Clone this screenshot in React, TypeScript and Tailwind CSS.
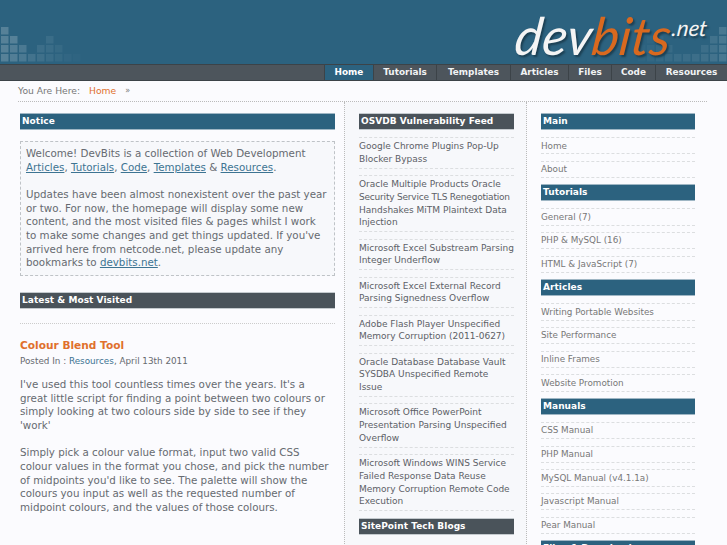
import React from 'react';

const navItems = [
  { label: 'Home', width: 'w-[49px]' },
  { label: 'Tutorials', width: 'w-[63px]' },
  { label: 'Templates', width: 'w-[74px]' },
  { label: 'Articles', width: 'w-[58px]' },
  { label: 'Files', width: 'w-[43px]' },
  { label: 'Code', width: 'w-[44px]' },
  { label: 'Resources', width: 'w-[72px]' },
];

const feed = [
  ['Google Chrome Plugins Pop-Up', 'Blocker Bypass'],
  ['Oracle Multiple Products Oracle', 'Security Service TLS Renegotiation', 'Handshakes MiTM Plaintext Data', 'Injection'],
  ['Microsoft Excel Substream Parsing', 'Integer Underflow'],
  ['Microsoft Excel External Record', 'Parsing Signedness Overflow'],
  ['Adobe Flash Player Unspecified', 'Memory Corruption (2011-0627)'],
  ['Oracle Database Database Vault', 'SYSDBA Unspecified Remote', 'Issue'],
  ['Microsoft Office PowerPoint', 'Presentation Parsing Unspecified', 'Overflow'],
  ['Microsoft Windows WINS Service', 'Failed Response Data Reuse', 'Memory Corruption Remote Code', 'Execution'],
];

const sideMenus = [
  { title: 'Main', items: ['Home', 'About'] },
  { title: 'Tutorials', items: ['General (7)', 'PHP & MySQL (16)', 'HTML & JavaScript (7)'] },
  { title: 'Articles', items: ['Writing Portable Websites', 'Site Performance', 'Inline Frames', 'Website Promotion'] },
  { title: 'Manuals', items: ['CSS Manual', 'PHP Manual', 'MySQL Manual (v4.1.1a)', 'Javascript Manual', 'Pear Manual'] },
  { title: 'Files & Downloads', items: [] as string[] },
];

// [col, row, opacity] for the faded pixel blocks in the banner
const leftBlocks = [
  [0, 0, 0.2], [0, 1, 0.2], [1, 1, 0.2], [5, 1, 0.07], [0, 2, 0.2], [1, 2, 0.18], [2, 2, 0.15], [4, 2, 0.08], [5, 2, 0.07], [6, 2, 0.05],
  [0, 3, 0.2], [1, 3, 0.18], [2, 3, 0.15], [3, 3, 0.11], [4, 3, 0.09], [5, 3, 0.07], [6, 3, 0.05], [7, 3, 0.03], [8, 3, 0.015],
];
const rightBlocks = [
  [9, 0, 0.14], [8, 1, 0.1], [9, 1, 0.14], [1, 1, 0.02], [2, 1, 0.035], [0, 2, 0.02], [1, 2, 0.035], [2, 2, 0.05], [3, 2, 0.06], [7, 2, 0.08], [8, 2, 0.1], [9, 2, 0.14],
  [0, 3, 0.02], [1, 3, 0.035], [2, 3, 0.05], [3, 3, 0.06], [4, 3, 0.07], [5, 3, 0.075], [6, 3, 0.08], [7, 3, 0.09], [8, 3, 0.11], [9, 3, 0.14],
];

const Blocks = ({ blocks, className }: { blocks: number[][]; className: string }) => (
  <svg viewBox="0 0 90 36" width="90" height="36" className={className}>
    {blocks.map(([c, r, o], i) => (
      <rect key={i} x={c * 9 + 1} y={r * 9} width="7.5" height="7.5" fill="#fff" opacity={o} />
    ))}
  </svg>
);

const Heading = ({ title, dark }: { title: string; dark?: boolean }) => (
  <h2 className={`h-[17px] pl-[2px] text-[9px] tracking-[0.05px] leading-[15px] font-bold text-white border-y ${dark ? 'bg-[#4a535a] border-[#c4cace]' : 'bg-[#2c627f] border-[#9fb6c4]'}`}>
    {title}
  </h2>
);

const A = ({ children }: { children: React.ReactNode }) => (
  <a className="text-[#3d7492] underline">{children}</a>
);

export default function App() {
  return (
    <div className="h-[545px] w-[727px] overflow-hidden bg-[#fbfbfe] font-['DejaVu_Sans',sans-serif] text-[10.3px] text-[#666a70]">
      <header className="relative h-[64px] bg-[#2c627f] overflow-hidden">
        <Blocks blocks={leftBlocks} className="absolute left-0 top-[27px]" />
        <Blocks blocks={rightBlocks} className="absolute right-0 top-[27px]" />
        <div className="absolute right-[21px] top-[8px] whitespace-nowrap font-['Lato',sans-serif] italic text-[52px] leading-[54px] text-[#f4f4f4] [transform:skewX(-7deg)] [text-shadow:2px_2px_2px_#1c3f52]">
          dev<span className="text-[#d9691f]">bits</span>
          <span className="relative top-[-19px] text-[22px]">.net</span>
        </div>
      </header>

      <nav className="flex h-[17px] justify-end border-y border-[#3c4348] bg-[#4d555c]">
        {navItems.map((item, i) => (
          <a
            key={item.label}
            className={`block ${item.width} border-l border-[#3c4348] text-center text-[8.9px] leading-[15px] font-bold text-[#f1f3f4] ${i === 0 ? 'bg-[#2c627f] text-white' : ''}`}
          >
            {item.label}
          </a>
        ))}
      </nav>

      <div className="ml-[18px] mr-[20px] h-[21px] flex items-center gap-[9px] text-[9.2px] border-b border-dotted border-[#bbb]">
        <span className="text-[#777]">You Are Here:</span>
        <span className="text-[#e0702c]">Home</span>
        <span className="text-[#777] text-[8px]">»</span>
      </div>

      <div className="flex">
        <main className="w-[344px] shrink-0 pl-[20px] pr-[9px] pt-[11px]">
          <Heading title="Notice" />
          <div className="mt-[11px] border border-dashed border-[#bfc3c7] bg-[#f7f8fb] pl-[5px] pt-[5px] pb-[5px] leading-[13.67px] whitespace-nowrap">
            <p>
              Welcome! DevBits is a collection of Web Development<br />
              <A>Articles</A>, <A>Tutorials</A>, <A>Code</A>, <A>Templates</A> &amp; <A>Resources</A>.
            </p>
            <p className="mt-[13.67px]">
              Updates have been almost nonexistent over the past year<br />
              or two. For now, the homepage will display some new<br />
              content, and the most visited files &amp; pages whilst I work<br />
              to make some changes and get things updated. If you've<br />
              arrived here from netcode.net, please update any<br />
              bookmarks to <A>devbits.net</A>.
            </p>
          </div>
          <div className="mt-[16px]">
            <Heading title="Latest & Most Visited" dark />
          </div>
          <div className="mt-[14px] border-t border-dotted border-[#ccc]" />
          <h3 className="mt-[14px] text-[10.6px] font-bold text-[#e0702c]">Colour Blend Tool</h3>
          <div className="mt-[1px] text-[8.8px]">
            Posted In : <span className="text-[#3d7492]">Resources</span>, April 13th 2011
          </div>
          <p className="mt-[10px] leading-[13.67px] whitespace-nowrap">
            I've used this tool countless times over the years. It's a<br />
            great little script for finding a point between two colours or<br />
            simply looking at two colours side by side to see if they<br />
            'work'
          </p>
          <p className="mt-[13.67px] leading-[13.67px] whitespace-nowrap">
            Simply pick a colour value format, input two valid CSS<br />
            colour values in the format you chose, and pick the number<br />
            of midpoints you'd like to see. The palette will show the<br />
            colours you input as well as the requested number of<br />
            midpoint colours, and the values of those colours.
          </p>
        </main>

        <section className="w-[183px] shrink-0 border-x border-dotted border-[#bbb] bg-[#f7f8fb] pl-[14px] pr-[12px] pt-[11px]">
          <Heading title="OSVDB Vulnerability Feed" dark />
          <ul className="mt-[7px]">
            {feed.map((lines) => (
              <li key={lines[0]} className="mb-[6.4px] border-y border-dashed border-[#dcdee0] py-[2px] text-[9px] leading-[12.8px] text-[#5c6066] whitespace-nowrap">
                {lines.map((l) => (
                  <div key={l} className={l.startsWith('Security') ? 'tracking-[-0.2px]' : ''}>
                    {l}
                  </div>
                ))}
              </li>
            ))}
          </ul>
          <Heading title="SitePoint Tech Blogs" dark />
        </section>

        <aside className="w-[154px] ml-[14px] shrink-0 pt-[11px]">
          {sideMenus.map((m) => (
            <div key={m.title}>
              <Heading title={m.title} />
              <ul className="mt-[7px]">
                {m.items.map((t) => (
                  <li key={t} className="mb-[6.37px] border-y border-dashed border-[#dcdee0] py-[2.5px] text-[8.8px] leading-[10.3px] text-[#777]">
                    {t}
                  </li>
                ))}
              </ul>
            </div>
          ))}
        </aside>
      </div>
    </div>
  );
}
